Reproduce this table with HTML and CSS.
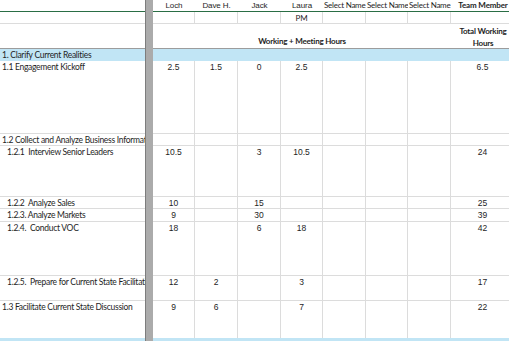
FILE: index.html
```html
<!DOCTYPE html>
<html>
<head>
<meta charset="utf-8">
<link rel="stylesheet" href="styles.css">
</head>
<body>
<div class="sheet">
  <div class="divider"></div>

  <!-- row 1 -->
  <div class="c lbl r1"></div>
  <div class="c r1 hd num">Loch</div>
  <div class="c r1 hd num">Dave H.</div>
  <div class="c r1 hd num">Jack</div>
  <div class="c r1 hd num">Laura</div>
  <div class="c r1 hd sel">Select Name</div>
  <div class="c r1 hd sel">Select Name</div>
  <div class="c r1 hd sel">Select Name</div>
  <div class="c r1 hd team">Team Member</div>

  <!-- row 2 -->
  <div class="c lbl"></div>
  <div class="c g"></div>
  <div class="c g"></div>
  <div class="c g"></div>
  <div class="c g pm">PM</div>
  <div class="c g"></div>
  <div class="c g"></div>
  <div class="c g"></div>
  <div class="c g"></div>

  <!-- row 3 -->
  <div class="c lbl r3"></div>
  <div class="c r3 merged">Working + Meeting Hours</div>
  <div class="c r3 g total">Total Working<br>Hours</div>

  <!-- row 4 -->
  <div class="c lbl blue">1. Clarify Current Realities</div>
  <div class="c blue span-all"></div>

  <!-- 1.1 -->
  <div class="c lbl">1.1 Engagement Kickoff</div>
  <div class="c g v">2.5</div>
  <div class="c g v">1.5</div>
  <div class="c g v">0</div>
  <div class="c g v">2.5</div>
  <div class="c g v"></div>
  <div class="c g v"></div>
  <div class="c g v"></div>
  <div class="c g v">6.5</div>

  <!-- 1.2 -->
  <div class="c lbl">1.2 Collect and Analyze Business Information</div>
  <div class="c g v"></div>
  <div class="c g v"></div>
  <div class="c g v"></div>
  <div class="c g v"></div>
  <div class="c g v"></div>
  <div class="c g v"></div>
  <div class="c g v"></div>
  <div class="c g v"></div>

  <!-- 1.2.1 -->
  <div class="c lbl ind">1.2.1&nbsp; Interview Senior Leaders</div>
  <div class="c g v">10.5</div>
  <div class="c g v"></div>
  <div class="c g v">3</div>
  <div class="c g v">10.5</div>
  <div class="c g v"></div>
  <div class="c g v"></div>
  <div class="c g v"></div>
  <div class="c g v">24</div>

  <!-- 1.2.2 -->
  <div class="c lbl ind">1.2.2&nbsp; Analyze Sales</div>
  <div class="c g v">10</div>
  <div class="c g v"></div>
  <div class="c g v">15</div>
  <div class="c g v"></div>
  <div class="c g v"></div>
  <div class="c g v"></div>
  <div class="c g v"></div>
  <div class="c g v">25</div>

  <!-- 1.2.3 -->
  <div class="c lbl ind">1.2.3. Analyze Markets</div>
  <div class="c g v">9</div>
  <div class="c g v"></div>
  <div class="c g v">30</div>
  <div class="c g v"></div>
  <div class="c g v"></div>
  <div class="c g v"></div>
  <div class="c g v"></div>
  <div class="c g v">39</div>

  <!-- 1.2.4 -->
  <div class="c lbl ind">1.2.4.&nbsp; Conduct VOC</div>
  <div class="c g v">18</div>
  <div class="c g v"></div>
  <div class="c g v">6</div>
  <div class="c g v">18</div>
  <div class="c g v"></div>
  <div class="c g v"></div>
  <div class="c g v"></div>
  <div class="c g v">42</div>

  <!-- 1.2.5 -->
  <div class="c lbl ind">1.2.5.&nbsp; Prepare for Current State Facilitation</div>
  <div class="c g v">12</div>
  <div class="c g v">2</div>
  <div class="c g v"></div>
  <div class="c g v">3</div>
  <div class="c g v"></div>
  <div class="c g v"></div>
  <div class="c g v"></div>
  <div class="c g v">17</div>

  <!-- 1.3 -->
  <div class="c lbl nob">1.3 Facilitate Current State Discussion</div>
  <div class="c g v nob">9</div>
  <div class="c g v nob">6</div>
  <div class="c g v nob"></div>
  <div class="c g v nob">7</div>
  <div class="c g v nob"></div>
  <div class="c g v nob"></div>
  <div class="c g v nob"></div>
  <div class="c g v nob">22</div>

  <!-- next blue row -->
  <div class="c lbl blue"></div>
  <div class="c blue span-all"></div>
</div>
</body>
</html>
```

FILE: styles.css
```css
html, body {
  margin: 0;
  padding: 0;
  background: #ffffff;
  overflow: hidden;
}

.sheet {
  width: 515px;
  display: grid;
  grid-template-columns: 145px 8px 42px 43px 43px 42px 43px 42px 43px 64px;
  grid-template-rows: 12px 12px 25px 12px 73px 12px 51px 12px 13px 54px 25px 37px 20px;
  font-family: "Lato", "Liberation Sans", sans-serif;
  font-size: 8.5px;
  color: #1e1e1e;
}

.divider {
  grid-column: 2;
  grid-row: 1 / -1;
  background: #ababab;
  border-left: 1px solid #7d7d7d;
  box-sizing: border-box;
  z-index: 2;
}

.c {
  box-sizing: border-box;
  overflow: hidden;
  white-space: nowrap;
  line-height: 11px;
  border-bottom: 1px solid #dcdcdc;
}

.lbl {
  grid-column: 1;
  padding-left: 2px;
  padding-top: 1px;
  letter-spacing: -0.28px;
}

.lbl.ind {
  padding-left: 7px;
}

.r1 {
  border-bottom: 1px solid #2a6e45;
}

.r1.lbl {
  padding-top: 0;
}

.hd {
  text-align: center;
}

.hd.num {
  font-family: "Liberation Sans", sans-serif;
  font-size: 8px;
  letter-spacing: -0.1px;
}

.hd.sel {
  text-align: left;
  padding-left: 1px;
  font-size: 8px;
  letter-spacing: -0.25px;
}

.hd.team {
  font-weight: bold;
  font-size: 8px;
  letter-spacing: -0.15px;
}

.g {
  border-right: 1px solid #dcdcdc;
}

.pm {
  text-align: center;
  padding-top: 1px;
  font-size: 8px;
}

.r3 {
  border-bottom: 1px solid #9c9c9c;
}

.merged {
  grid-column: 3 / 10;
  font-weight: bold;
  font-size: 8px;
  display: flex;
  align-items: flex-end;
  justify-content: center;
  padding-bottom: 1px;
  letter-spacing: -0.2px;
}

.total {
  border-right: none;
  text-align: center;
  font-weight: bold;
  font-size: 8px;
  white-space: normal;
  line-height: 12px;
  padding-top: 1px;
  letter-spacing: -0.2px;
}

.blue {
  background: #c1e5f5;
  border-bottom: none;
}

.span-all {
  grid-column: 3 / 11;
}

.v {
  text-align: center;
  font-family: "Liberation Sans", sans-serif;
  font-size: 8.5px;
  padding-top: 1px;
}

.nob {
  border-bottom: none;
}
```
